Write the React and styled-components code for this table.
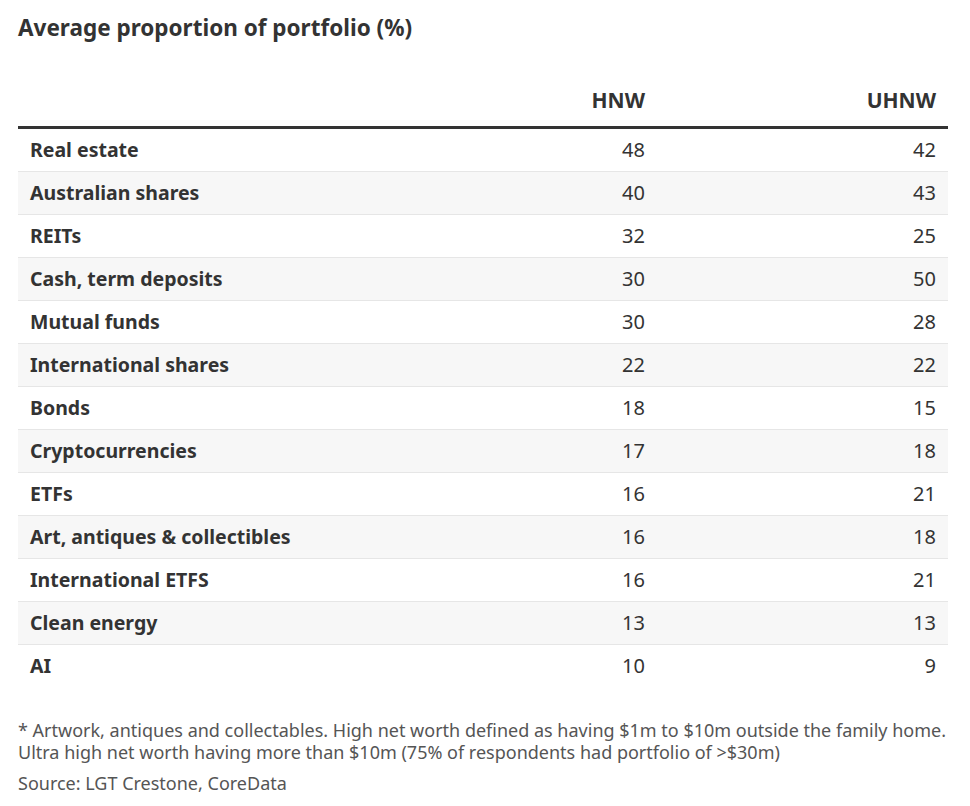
import React from 'react';
import styled, { createGlobalStyle } from 'styled-components';

const GlobalStyle = createGlobalStyle`
  body {
    margin: 0;
    background: #fff;
    font-family: "Noto Sans", "Open Sans", sans-serif;
    color: #333;
  }
`;

const Wrapper = styled.div`
  padding: 14px 22px 0 18px;
`;

const Title = styled.h2`
  margin: 0;
  font-size: 22.5px;
  line-height: 28px;
  font-weight: 700;
  color: #333;
`;

const Table = styled.table`
  width: 100%;
  margin-top: 28px;
  border-collapse: collapse;
`;

const HeadCell = styled.th`
  height: 41px;
  padding: 0 12px 15px;
  vertical-align: bottom;
  text-align: ${(p) => (p.$num ? 'right' : 'left')};
  width: ${(p) => (p.$num ? '267px' : 'auto')};
  font-size: 21px;
  font-weight: 700;
  line-height: 22px;
  border-bottom: 3px solid #333;
`;

const Row = styled.tr`
  background: ${(p) => (p.$shaded ? '#f7f7f7' : '#fff')};
  border-bottom: 1px solid ${(p) => (p.$last ? 'transparent' : '#e6e6e6')};
`;

const Cell = styled.td`
  height: 42px;
  padding: 0 12px;
  line-height: 22px;
  text-align: ${(p) => (p.$num ? 'right' : 'left')};
  font-size: ${(p) => (p.$num ? '20px' : '19.5px')};
  font-weight: ${(p) => (p.$num ? 400 : 700)};
`;

const Notes = styled.div`
  margin-top: 31px;
  font-size: 18px;
  line-height: 22px;
  color: #555;
`;

const NoteLine = styled.div`
  white-space: nowrap;
`;

const Source = styled.p`
  margin: 9px 0 0;
`;

const rows = [
  ['Real estate', 48, 42],
  ['Australian shares', 40, 43],
  ['REITs', 32, 25],
  ['Cash, term deposits', 30, 50],
  ['Mutual funds', 30, 28],
  ['International shares', 22, 22],
  ['Bonds', 18, 15],
  ['Cryptocurrencies', 17, 18],
  ['ETFs', 16, 21],
  ['Art, antiques & collectibles', 16, 18],
  ['International ETFS', 16, 21],
  ['Clean energy', 13, 13],
  ['AI', 10, 9],
];

export default function App() {
  return (
    <>
      <GlobalStyle />
      <Wrapper>
        <Title>Average proportion of portfolio (%)</Title>
        <Table>
          <thead>
            <tr>
              <HeadCell />
              <HeadCell $num>HNW</HeadCell>
              <HeadCell $num>UHNW</HeadCell>
            </tr>
          </thead>
          <tbody>
            {rows.map(([label, hnw, uhnw], i) => (
              <Row key={label} $shaded={i % 2 === 1} $last={i === rows.length - 1}>
                <Cell>{label}</Cell>
                <Cell $num>{hnw}</Cell>
                <Cell $num>{uhnw}</Cell>
              </Row>
            ))}
          </tbody>
        </Table>
        <Notes>
          <NoteLine>
            * Artwork, antiques and collectables. High net worth defined as having $1m to $10m outside the family home.
          </NoteLine>
          <NoteLine>
            Ultra high net worth having more than $10m (75% of respondents had portfolio of &gt;$30m)
          </NoteLine>
          <Source>Source: LGT Crestone, CoreData</Source>
        </Notes>
      </Wrapper>
    </>
  );
}
